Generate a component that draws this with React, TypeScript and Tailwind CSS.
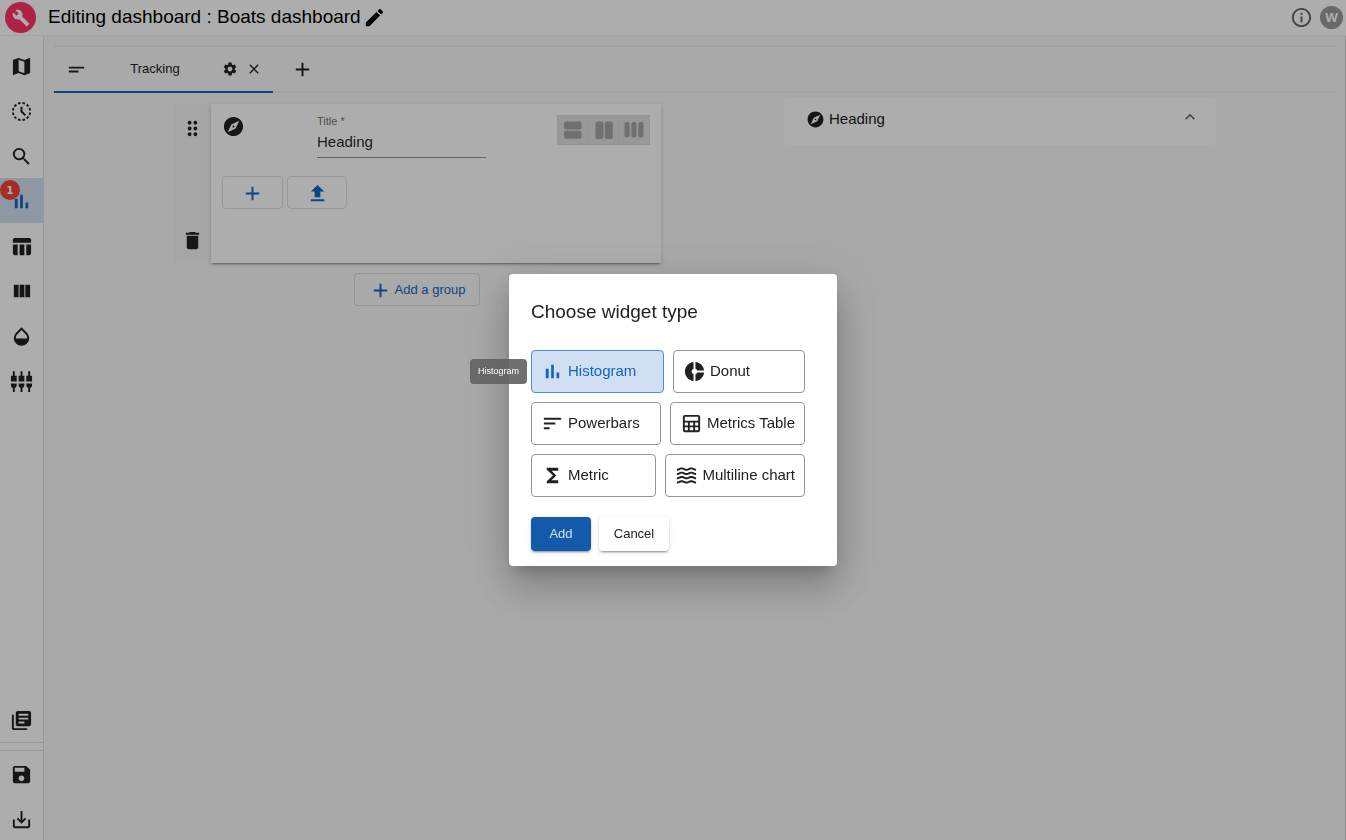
import { useState } from "react";
import type { ReactNode } from "react";
import {
  MdAdd,
  MdClose,
  MdDelete,
  MdDragIndicator,
  MdEdit,
  MdExplore,
  MdFunctions,
  MdHistoryToggleOff,
  MdInfoOutline,
  MdKeyboardArrowUp,
  MdLibraryBooks,
  MdMap,
  MdOpacity,
  MdSave,
  MdSaveAlt,
  MdSearch,
  MdSettings,
  MdSettingsInputComponent,
  MdShortText,
  MdSort,
  MdWaves,
} from "react-icons/md";

function Glyph({ d, size = 23 }: { d: string; size?: number }) {
  return (
    <svg viewBox="0 0 24 24" width={size} height={size} fill="currentColor" aria-hidden="true">
      <path d={d} />
    </svg>
  );
}

const WRENCH =
  "M22.7 19l-9.1-9.1c.9-2.3.4-5-1.5-6.9-2-2-5-2.4-7.4-1.3L9 6 6 9 1.6 4.7C.4 7.1.9 10.1 2.9 12.1c1.9 1.9 4.6 2.4 6.9 1.5l9.1 9.1c.4.4 1 .4 1.4 0l2.3-2.3c.5-.4.5-1.1.1-1.4z";
const BARS = "M5 9.2h3V19H5zM10.6 5h2.8v14h-2.8zm5.6 8H19v6h-2.8z";
const TABLE =
  "M10 10.02h5V21h-5zM17 21h3c1.1 0 2-.9 2-2v-9h-5v11zm3-18H5c-1.1 0-2 .9-2 2v3h19V5c0-1.1-.9-2-2-2zM3 19c0 1.1.9 2 2 2h3V10H3v9z";
const COLUMNS = "M10 18h5V5h-5v13zm-6 0h5V5H4v13zM16 5v13h5V5h-5z";
const UPLOAD = "M5 10h4v6h6v-6h4l-7-7zM5 18h14v2H5z";
const DONUT =
  "M11 9.16V2c-5 .5-9 4.79-9 10s4 9.5 9 10v-7.16c-1-.41-2-1.52-2-2.84s1-2.43 2-2.84zM14.86 11H22c-.48-4.75-4-8.53-9-9v7.16c1 .3 1.52.98 1.86 1.84zm0 2c-.34.86-.86 1.54-1.86 1.84V22c5-.47 8.52-4.25 9-9h-7.14z";
const GRID_TABLE =
  "M19 3H5c-1.1 0-2 .9-2 2v14c0 1.1.9 2 2 2h14c1.1 0 2-.9 2-2V5c0-1.1-.9-2-2-2zm0 2v4H5V5h14zM5 11h3.2v3H5v-3zm5.2 0h3.6v3h-3.6v-3zm5.6 0H19v3h-3.2v-3zM5 16h3.2v3H5v-3zm5.2 0h3.6v3h-3.6v-3zm5.6 0H19v3h-3.2v-3z";

function NavItem({ label, active, children }: { label: string; active?: boolean; children: ReactNode }) {
  return (
    <button
      aria-label={label}
      className={
        active
          ? "relative flex h-[45px] w-full items-center justify-center bg-[#d0e0f2] pt-0.5 text-[#1565c0]"
          : "relative flex h-[45px] w-full items-center justify-center pt-0.5"
      }
    >
      {children}
    </button>
  );
}

function Sidebar() {
  return (
    <nav className="flex w-11 shrink-0 flex-col border-r border-black/12 bg-white pt-[7px] text-[#212121]">
      <NavItem label="Map"><MdMap size={23} /></NavItem>
      <NavItem label="Timeline"><MdHistoryToggleOff size={23} /></NavItem>
      <NavItem label="Search"><MdSearch size={23} /></NavItem>
      <NavItem label="Analytics" active>
        <Glyph d={BARS} />
        <span className="absolute top-0.5 left-0 flex size-5 items-center justify-center rounded-full bg-[#f44336] font-['DejaVu_Sans',sans-serif] text-[10px] font-bold text-white">
          1
        </span>
      </NavItem>
      <NavItem label="Result list"><Glyph d={TABLE} /></NavItem>
      <NavItem label="Columns"><Glyph d={COLUMNS} /></NavItem>
      <NavItem label="Look and feel"><MdOpacity size={23} /></NavItem>
      <NavItem label="External nodes"><MdSettingsInputComponent size={23} /></NavItem>
      <div className="mt-auto border-b border-black/12">
        <NavItem label="Resources"><MdLibraryBooks size={23} /></NavItem>
      </div>
      <div className="mt-[7px] flex flex-col gap-1 border-t border-black/12 pt-[3px]">
        <button aria-label="Save" className="flex h-[41px] items-center justify-center"><MdSave size={23} /></button>
        <button aria-label="Export" className="flex h-[41px] items-center justify-center"><MdSaveAlt size={23} /></button>
      </div>
    </nav>
  );
}

function Header() {
  return (
    <header className="flex h-9 shrink-0 items-center border-b border-black/5 bg-white pr-[3px] pl-[5px]">
      <span className="flex size-[31px] items-center justify-center rounded-full bg-[#ff3366] text-white">
        <Glyph d={WRENCH} size={18} />
      </span>
      <h1 className="ml-3 pb-0.5 text-[19px] leading-6 text-black">Editing dashboard : Boats dashboard</h1>
      <button aria-label="Rename dashboard" className="ml-0.5 text-black"><MdEdit size={23} /></button>
      <button aria-label="Information" className="ml-auto text-[#616161]"><MdInfoOutline size={23} /></button>
      <span className="ml-[7px] flex size-[23px] items-center justify-center rounded-full bg-[#9b9b9b] font-['Noto_Sans',sans-serif] text-[13px] font-bold text-white">
        W
      </span>
    </header>
  );
}

function TabBar() {
  return (
    <div className="mt-[9px] mr-2 ml-2.5 flex h-12 border-y-2 border-black/5">
      <div role="tab" aria-selected="true" className="-mb-0.5 flex w-[219px] items-center border-b-2 border-[#1565c0] pr-[11px] pl-[11px]">
        <MdShortText size={23} />
        <span className="flex-1 text-center text-[13px]">Tracking</span>
        <button aria-label="Tab settings"><MdSettings size={16} /></button>
        <button aria-label="Close tab" className="ml-2"><MdClose size={16} /></button>
      </div>
      <button aria-label="Add a tab" className="ml-[18px] pt-px"><MdAdd size={23} /></button>
    </div>
  );
}

function LayoutToggle() {
  return (
    <div className="flex h-[30px] w-[93px] border border-black/2 bg-[#e0e0e0] text-[#a6a6a6]">
      <button aria-label="One column" className="flex flex-1 items-center justify-center">
        <svg viewBox="0 0 18 18" width="18" height="18" fill="currentColor">
          <rect x="0" y="0.5" width="17.5" height="8" rx="2" />
          <rect x="0" y="9.8" width="17.5" height="8" rx="2" />
        </svg>
      </button>
      <button aria-label="Two columns" className="flex flex-1 items-center justify-center border-x border-black/2">
        <svg viewBox="0 0 18 18" width="18" height="18" fill="currentColor">
          <rect x="0.5" y="0.5" width="8" height="17.5" rx="2" />
          <rect x="9.8" y="0.5" width="8" height="17.5" rx="2" />
        </svg>
      </button>
      <button aria-label="Three columns" className="flex flex-1 items-center justify-center">
        <svg viewBox="0 0 20 18" width="20" height="18" fill="currentColor">
          <rect x="0.5" y="1" width="5.2" height="15.5" rx="2" />
          <rect x="7.4" y="1" width="5.2" height="15.5" rx="2" />
          <rect x="14.3" y="1" width="5.2" height="15.5" rx="2" />
        </svg>
      </button>
    </div>
  );
}

const OUTLINED = "flex h-[33px] items-center justify-center rounded-[4px] border border-black/12 text-[#1565c0]";

function GroupEditor() {
  const [title, setTitle] = useState("Heading");
  return (
    <section className="mx-auto mt-[11px] flex w-[488px] flex-col items-center gap-2.5">
      <div className="flex w-full">
        <div className="flex w-[38px] flex-col items-center justify-between bg-[#f5f5f5] pt-[13px] pb-[11px]">
          <button aria-label="Move group"><MdDragIndicator size={23} /></button>
          <button aria-label="Delete group"><MdDelete size={23} /></button>
        </div>
        <div className="flex h-[159px] flex-1 flex-col bg-white px-[11px] pt-[11px] shadow-[0_3px_1px_-2px_rgba(0,0,0,0.2),0_2px_2px_0_rgba(0,0,0,0.14),0_1px_5px_0_rgba(0,0,0,0.12)]">
          <div className="flex h-[61px] items-start">
            <button aria-label="Group icon"><MdExplore size={23} /></button>
            <label className="ml-[72px] flex w-[169px] flex-col border-b border-black/42 text-[11px] leading-3 text-black/60">
              Title *
              <input
                value={title}
                onChange={(e) => setTitle(e.target.value)}
                className="h-[30px] w-full bg-transparent pb-0.5 text-[15px] text-black/87 outline-none"
              />
            </label>
            <div className="ml-auto"><LayoutToggle /></div>
          </div>
          <div className="flex gap-1">
            <button aria-label="Add a widget" className={OUTLINED + " w-[61px] pt-0.5"}><MdAdd size={23} /></button>
            <button aria-label="Import a widget" className={OUTLINED + " w-[60px] pt-0.5"}><Glyph d={UPLOAD} /></button>
          </div>
        </div>
      </div>
      <button className={OUTLINED + " gap-[3px] px-3.5 text-[13px]"}>
        <MdAdd size={23} className="mt-0.5" />
        Add a group
      </button>
    </section>
  );
}

function Preview() {
  return (
    <section className="mt-1 ml-1 flex h-12 w-[432px] items-center rounded-[4px] bg-white pr-4 pb-1 pl-[22px]">
      <MdExplore size={19} />
      <span className="ml-1 text-[15px]">Heading</span>
      <button aria-label="Collapse" className="ml-auto pb-1 text-black/60"><MdKeyboardArrowUp size={20} /></button>
    </section>
  );
}

function Option({
  label,
  selected,
  className,
  onSelect,
  children,
}: {
  label: string;
  selected: boolean;
  className: string;
  onSelect: () => void;
  children: ReactNode;
}) {
  return (
    <button
      aria-pressed={selected}
      onClick={onSelect}
      className={
        "flex h-[43px] items-center gap-1 rounded-[4px] border px-[9px] text-[15px] " +
        (selected ? "border-[#4a8fdc] bg-[#d0dff2] text-[#1565c0] " : "border-[#959595] ") +
        className
      }
    >
      {children}
      {label}
    </button>
  );
}

function WidgetDialog() {
  const [choice, setChoice] = useState("Histogram");
  const option = (label: string, className: string, icon: ReactNode) => (
    <Option label={label} className={className} selected={choice === label} onSelect={() => setChoice(label)}>
      {icon}
    </Option>
  );
  return (
    <div className="fixed inset-0 flex items-center justify-center bg-black/32">
      <div
        role="dialog"
        aria-modal="true"
        aria-labelledby="dialog-title"
        className="w-[328px] rounded-[4px] bg-white px-[22px] pt-[23px] pb-[15px] shadow-[0_11px_15px_-7px_rgba(0,0,0,0.2),0_24px_38px_3px_rgba(0,0,0,0.14),0_9px_46px_8px_rgba(0,0,0,0.12)]"
      >
        <h2 id="dialog-title" className="text-[19px] leading-[30px]">Choose widget type</h2>
        <div className="mt-[23px] flex w-[274px] flex-col gap-[9px]">
          <div className="relative flex gap-[9px]">
            {option("Histogram", "flex-1", <Glyph d={BARS} />)}
            {option("Donut", "w-[132px]", <Glyph d={DONUT} />)}
            <div
              role="tooltip"
              className="absolute top-[9px] right-full mr-1 rounded-[4px] bg-[#616161]/90 px-2 py-1.5 text-[9px] leading-[13px] text-white"
            >
              Histogram
            </div>
          </div>
          <div className="flex gap-[9px]">
            {option("Powerbars", "flex-1", <MdSort size={23} />)}
            {option("Metrics Table", "", <Glyph d={GRID_TABLE} />)}
          </div>
          <div className="flex gap-[9px]">
            {option("Metric", "flex-1", <MdFunctions size={23} />)}
            {option("Multiline chart", "", <MdWaves size={23} />)}
          </div>
        </div>
        <div className="mt-5 flex gap-2 text-[13px]">
          <button className="h-[34px] w-[60px] rounded-[4px] bg-[#135aab] text-white/80 shadow-[0_3px_1px_-2px_rgba(0,0,0,0.2),0_2px_2px_0_rgba(0,0,0,0.14),0_1px_5px_0_rgba(0,0,0,0.12)]">
            Add
          </button>
          <button className="h-[34px] w-[70px] rounded-[4px] bg-white shadow-[0_3px_1px_-2px_rgba(0,0,0,0.2),0_2px_2px_0_rgba(0,0,0,0.14),0_1px_5px_0_rgba(0,0,0,0.12)]">
            Cancel
          </button>
        </div>
      </div>
    </div>
  );
}

export default function App() {
  return (
    <div className="flex h-screen flex-col overflow-hidden bg-[#fafafa] font-['Liberation_Sans',Arial,sans-serif] text-[#212121]">
      <Header />
      <div className="flex min-h-0 flex-1">
        <Sidebar />
        <main className="flex-1 border-r border-[#d0d0d0]">
          <TabBar />
          <div className="mr-2 ml-2.5 flex">
            <div className="flex-[726]"><GroupEditor /></div>
            <div className="flex-[557]"><Preview /></div>
          </div>
        </main>
      </div>
      <WidgetDialog />
    </div>
  );
}
